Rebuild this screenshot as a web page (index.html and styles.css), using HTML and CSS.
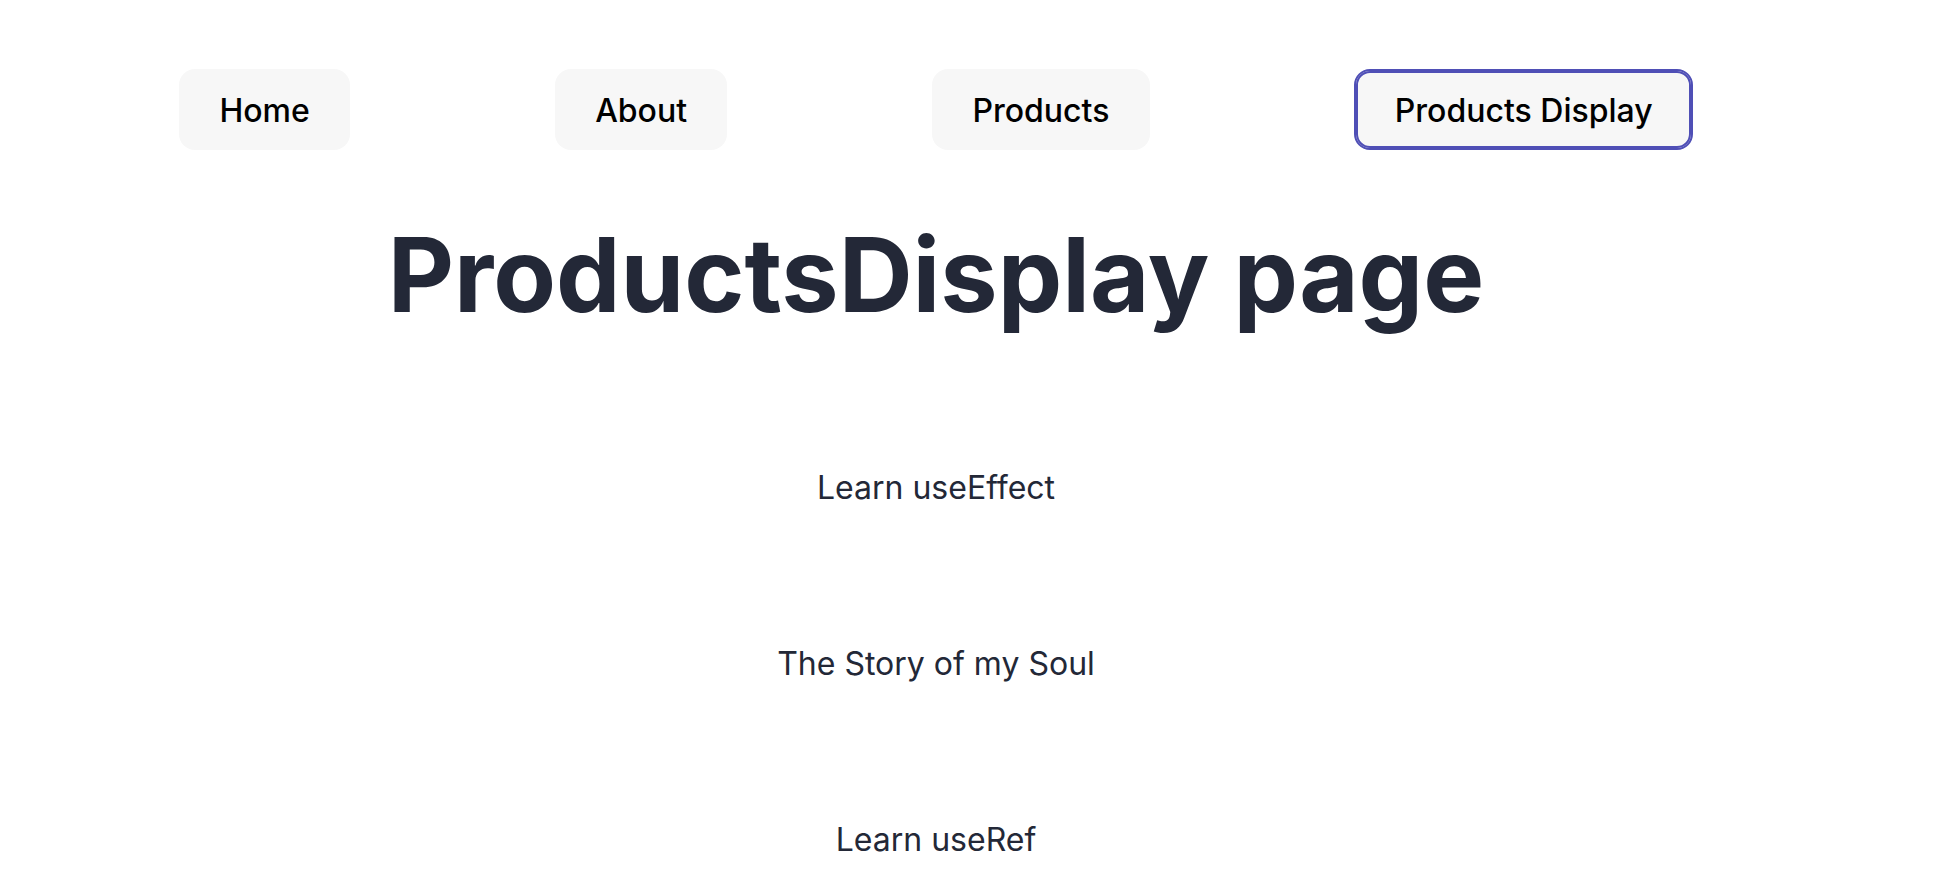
FILE: index.html
```html
<!DOCTYPE html>
<html lang="en">
<head>
<meta charset="utf-8">
<title>ProductsDisplay page</title>
<link rel="stylesheet" href="styles.css">
</head>
<body>
<div class="app">
  <nav class="nav">
    <button class="nav-btn">Home</button>
    <button class="nav-btn">About</button>
    <button class="nav-btn">Products</button>
    <button class="nav-btn nav-btn--active">Products Display</button>
  </nav>
  <h1 class="title">ProductsDisplay page</h1>
  <div class="list">
    <div class="item">Learn useEffect</div>
    <div class="item">The Story of my Soul</div>
    <div class="item">Learn useRef</div>
  </div>
</div>
</body>
</html>
```

FILE: styles.css
```css
html, body {
  margin: 0;
  padding: 0;
  background: #ffffff;
}

body {
  font-family: Inter, "Noto Sans", sans-serif;
  color: #232837;
  font-size: 32px;
  line-height: 1.5;
  overflow: hidden;
}

.app {
  width: 1514px;
  margin-left: 179px;
  padding-top: 69px;
  text-align: center;
}

.nav {
  display: flex;
  justify-content: space-between;
  align-items: center;
}

.nav-btn {
  font-family: Inter, "Noto Sans", sans-serif;
  font-size: 32px;
  font-weight: 500;
  line-height: normal;
  color: #000000;
  background: #f7f7f7;
  border: 2px solid transparent;
  border-radius: 16px;
  padding: 20px 38.4px 18.4px;
  cursor: pointer;
}

.nav-btn--active {
  border-color: #4f4fb6;
  box-shadow: inset 0 0 0 2px #4f4fb6;
}

.title {
  font-size: 102.4px;
  font-weight: 700;
  line-height: 1.1;
  margin: 68.6px 0;
  color: #232837;
}

.list {
  display: flex;
  flex-direction: column;
}

.item {
  padding: 64px 0;
  font-size: 32px;
  line-height: 48px;
}
```
